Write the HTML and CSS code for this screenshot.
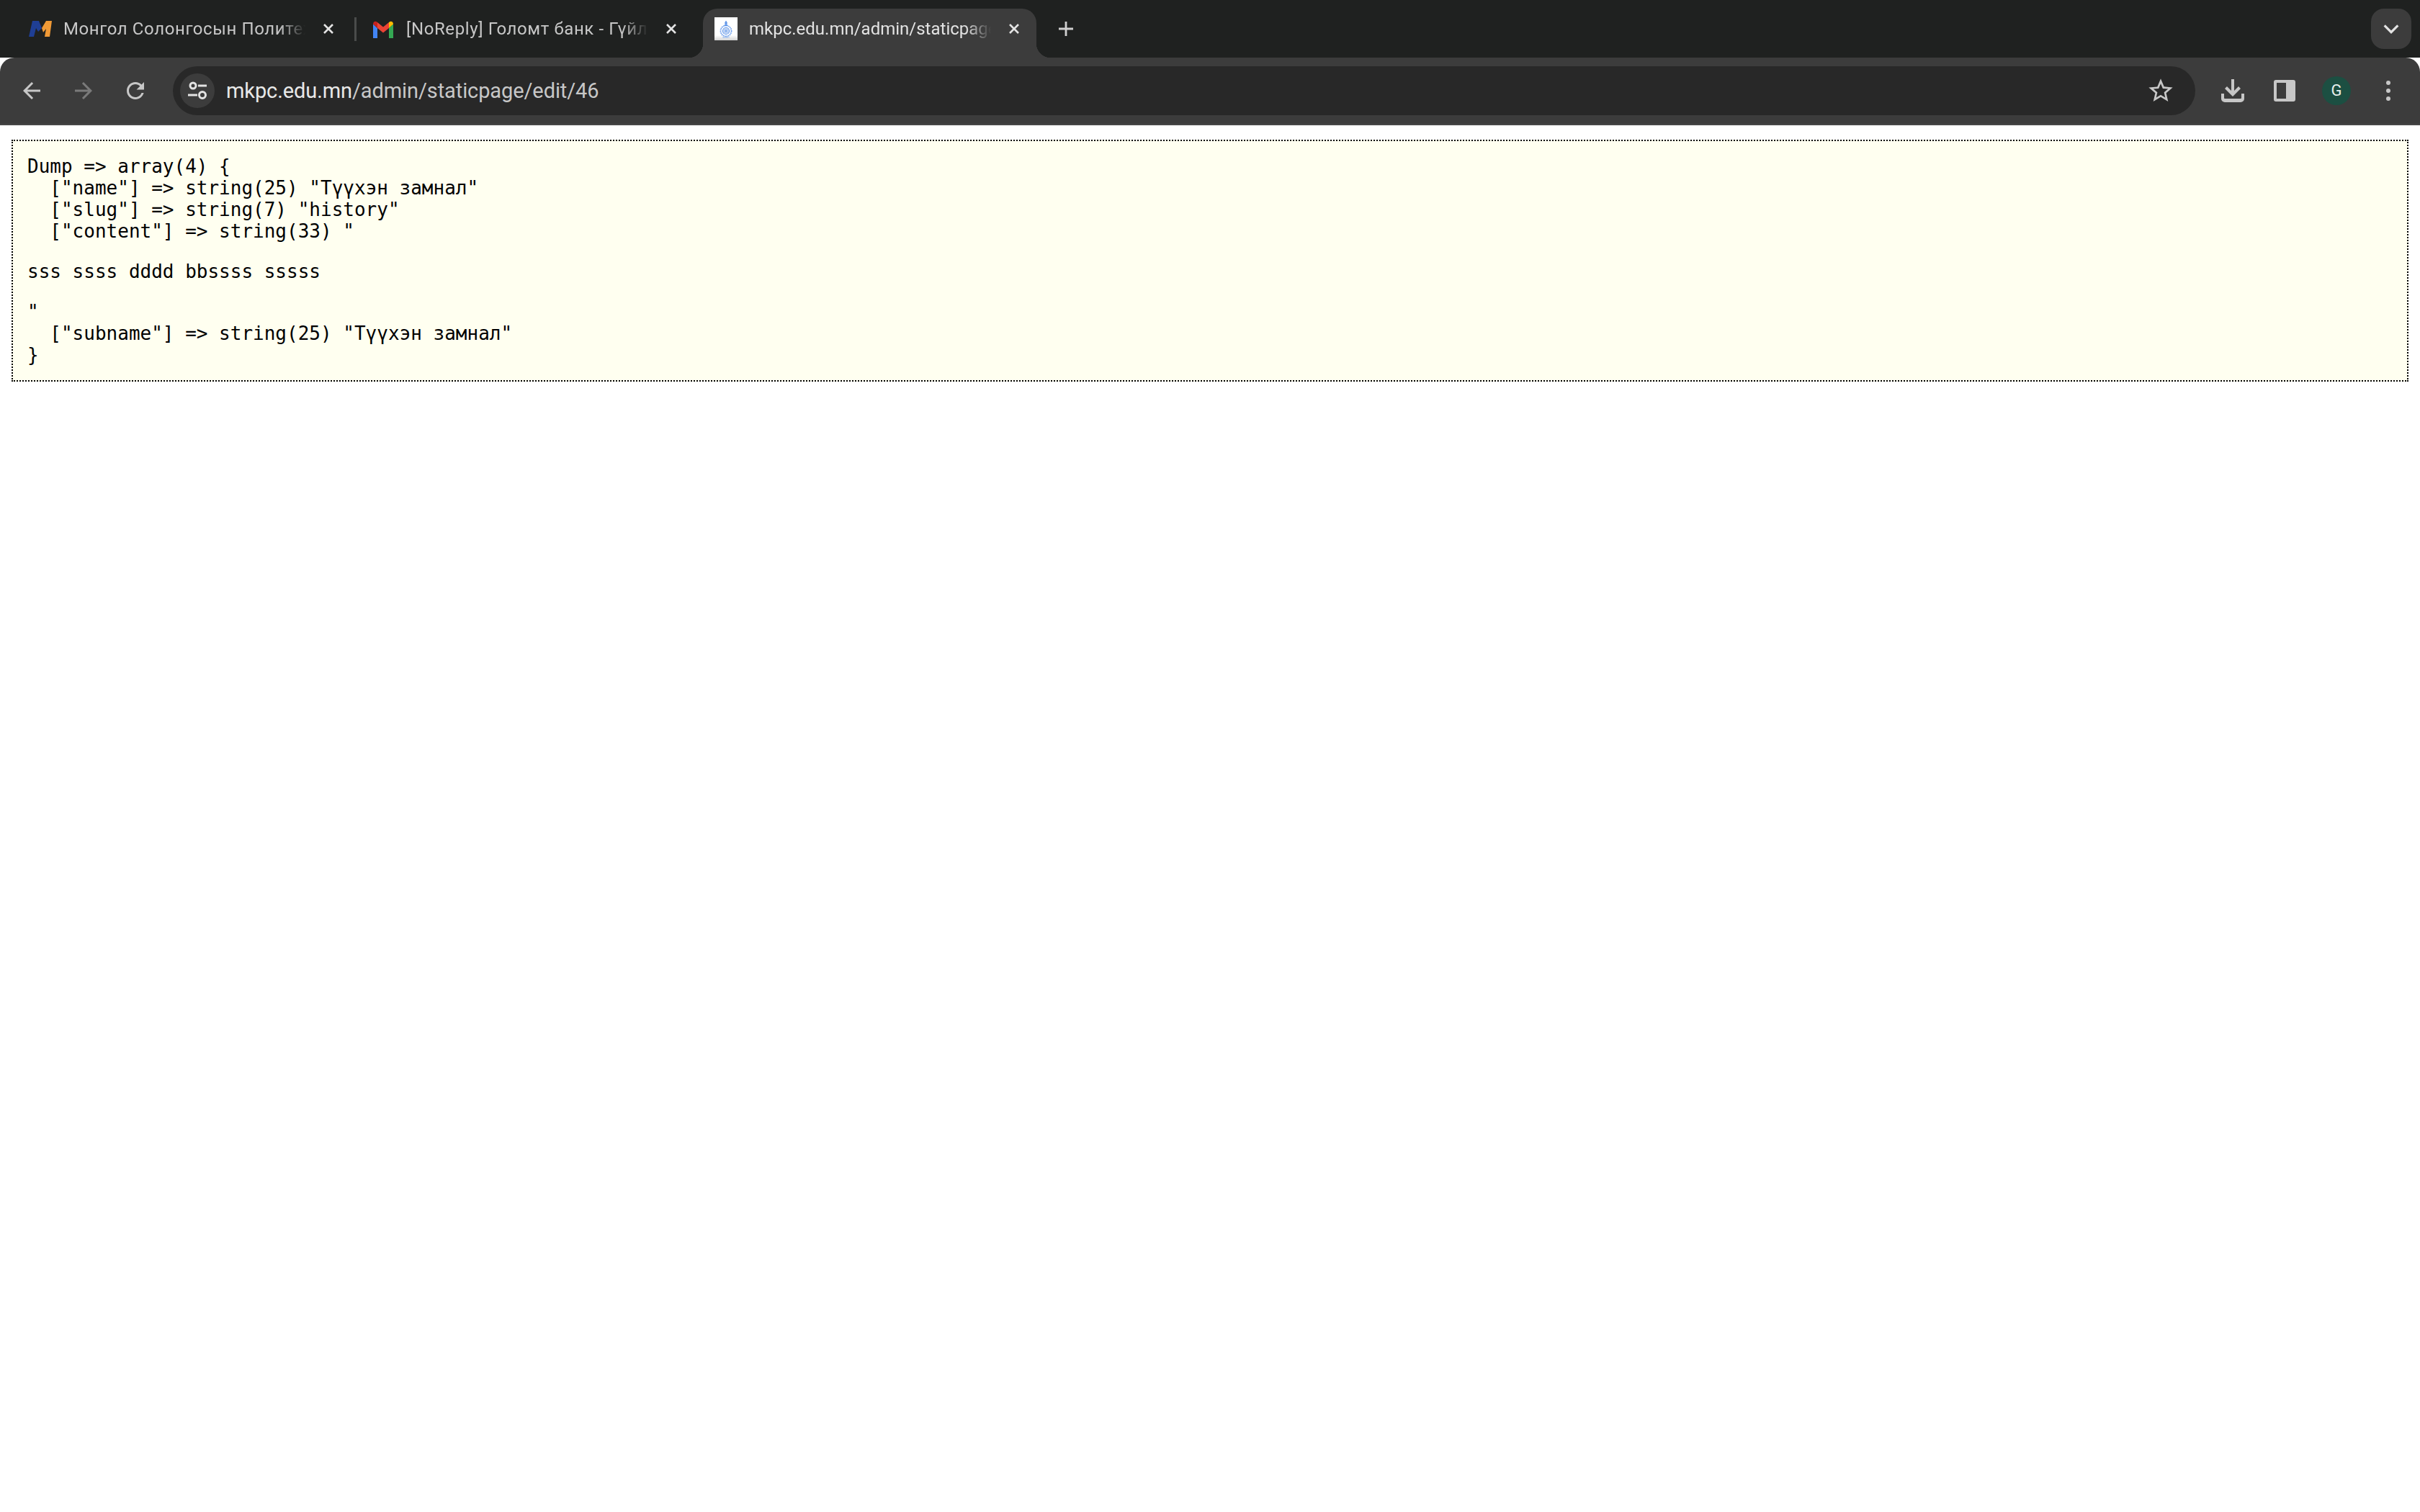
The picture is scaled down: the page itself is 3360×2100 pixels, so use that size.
FILE: index.html
```html
<!DOCTYPE html>
<html lang="mn">
<head>
<meta charset="utf-8">
<title>mkpc.edu.mn/admin/staticpage/edit/46</title>
<link rel="stylesheet" href="styles.css">
</head>
<body>
<header class="chrome">
  <div class="tabstrip">
    <div class="tab">
      <svg class="favicon" viewBox="0 0 32 24"><path fill="#1f3f95" d="M5 1h9l4 10-5 5-3-5-3 12H0z"/><path fill="#f09a36" d="M18 11l6-10h8l-3 22h-7l2-11-4 5z"/></svg>
      <span class="tab-title tab-title-wide">Монгол Солонгосын Политехник</span>
      <svg class="tab-close" viewBox="0 0 32 32"><path d="M10 10l12 12M22 10L10 22"/></svg>
    </div>
    <div class="tab-gap tab-gap-line"></div>
    <div class="tab">
      <svg class="favicon" viewBox="0 0 32 26"><path fill="#4285f4" d="M2 26h6V12L2 6.500z"/><path fill="#34a853" d="M24 26h6V6.500L24 12z"/><path fill="#ea4335" d="M8 12V4l8 6.500L24 4v8l-8 6.500z"/><path fill="#fbbc04" d="M24 4c3-2.500 6-.5 6 2.500L24 12z"/><path fill="#c5221f" d="M2 6.500C2 3.500 5 1.500 8 4v8z"/></svg>
      <span class="tab-title tab-title-wide">[NoReply] Голомт банк - Гүйлгээ</span>
      <svg class="tab-close" viewBox="0 0 32 32"><path d="M10 10l12 12M22 10L10 22"/></svg>
    </div>
    <div class="tab-gap"></div>
    <div class="tab tab-active">
      <svg class="favicon favicon-seal" viewBox="0 0 32 32"><defs><linearGradient id="seal-bg" x1="0" y1="0" x2="0" y2="1"><stop offset=".78" stop-color="#fff"/><stop offset="1" stop-color="#d4d4d4"/></linearGradient></defs><rect width="32" height="32" fill="url(#seal-bg)"/><path fill="#5c93e8" d="M15.200 5h1.600v2h1v2h-1v1h1.400v2h-4.400v-2h1.400V9h-1V7h1z"/><circle cx="16" cy="19" r="7.500" fill="none" stroke="#6a9dec" stroke-width="1.800" stroke-dasharray="1.600 .8"/><circle cx="16" cy="19" r="4.500" fill="none" stroke="#5c93e8" stroke-width="1.200"/><path fill="none" stroke="#8fb4ee" stroke-width="1.200" d="M11.500 19h9M16 14.500v9M12.800 15.800l6.400 6.400M19.200 15.800l-6.400 6.400"/><path fill="none" stroke="#8fb4ee" stroke-width="1.400" stroke-dasharray="1.400 .7" d="M11.500 28h9"/></svg>
      <span class="tab-title">mkpc.edu.mn/admin/staticpage/edit/46</span>
      <svg class="tab-close" viewBox="0 0 32 32"><path d="M10 10l12 12M22 10L10 22"/></svg>
    </div>
    <svg class="new-tab" viewBox="0 0 32 32"><path d="M16 6v20M6 16h20"/></svg>
    <div class="tabstrip-fill"></div>
    <div class="tab-list"><svg viewBox="0 0 24 24"><path d="M5 8.500l7 7 7-7"/></svg></div>
  </div>
  <div class="toolbar">
    <svg class="tool" viewBox="0 0 24 24"><path d="M20 11H7.830l5.590-5.590L12 4l-8 8 8 8 1.410-1.410L7.830 13H20v-2z"/></svg>
    <svg class="tool tool-off" viewBox="0 0 24 24"><path d="M4 11h12.170l-5.590-5.590L12 4l8 8-8 8-1.410-1.410L16.170 13H4v-2z"/></svg>
    <svg class="tool" viewBox="0 0 24 24"><path d="M17.650 6.350C16.200 4.900 14.210 4 12 4c-4.420 0-7.990 3.580-7.990 8s3.570 8 7.990 8c3.730 0 6.840-2.550 7.730-6h-2.080c-.82 2.330-3.040 4-5.650 4-3.310 0-6-2.690-6-6s2.690-6 6-6c1.660 0 3.140.69 4.220 1.780L13 11h7V4l-2.350 2.350z"/></svg>
    <div class="omnibox">
      <div class="site-chip">
        <svg viewBox="0 0 48 48"><g fill="none" stroke="#e3e3e3" stroke-width="3"><circle cx="18" cy="17" r="4"/><path d="M25 17h12"/><path d="M11 30h13"/><circle cx="31" cy="30" r="4.500"/></g></svg>
      </div>
      <span class="url"><span class="url-host">mkpc.edu.mn</span>/admin/staticpage/edit/46</span>
      <svg class="star" viewBox="0 0 24 24"><path d="M22 9.240l-7.190-.62L12 2 9.190 8.630 2 9.240l5.460 4.730L5.820 21 12 17.270 18.180 21l-1.630-7.030L22 9.240zM12 15.400l-3.760 2.270 1-4.280-3.320-2.880 4.380-.38L12 6.100l1.710 4.040 4.380.38-3.320 2.880 1 4.280L12 15.400z"/></svg>
    </div>
    <div class="actions">
      <svg class="action" viewBox="0 0 40 40"><path d="M18 4h4v16l6-6 3 3-11 11L9 17l3-3 6 6z"/><path d="M4 24h4v6a1 1 0 0 0 1 1h22a1 1 0 0 0 1-1v-6h4v7a5 5 0 0 1-5 5H9a5 5 0 0 1-5-5z"/></svg>
      <svg class="action" viewBox="0 0 40 40"><path fill-rule="evenodd" d="M8 5h24a3 3 0 0 1 3 3v24a3 3 0 0 1-3 3H8a3 3 0 0 1-3-3V8a3 3 0 0 1 3-3zm1 4v22h13V9z"/></svg>
      <div class="avatar">G</div>
      <svg class="action" viewBox="0 0 40 40"><circle cx="20" cy="9" r="3"/><circle cx="20" cy="20" r="3"/><circle cx="20" cy="31" r="3"/></svg>
    </div>
  </div>
</header>
<main class="page">
  <div class="dump">
    <pre class="dump-block">Dump =&gt; array(4) {
  ["name"] =&gt; string(25) "Түүхэн замнал"
  ["slug"] =&gt; string(7) "history"
  ["content"] =&gt; string(33) "</pre>
    <pre class="dump-block">sss ssss dddd bbssss sssss</pre>
    <pre class="dump-block">"
  ["subname"] =&gt; string(25) "Түүхэн замнал"
}</pre>
  </div>
</main>
</body>
</html>
```
FILE: styles.css
```css
* { box-sizing: border-box; }
html, body { margin: 0; padding: 0; background: #fff; }
body { width: 3360px; height: 2100px; overflow: hidden; }

.chrome { font-family: Roboto, "Liberation Sans", sans-serif; }

.tabstrip {
  display: flex;
  align-items: flex-end;
  height: 80px;
  padding-left: 24px;
  padding-right: 12px;
  background: #1f2120;
}

.tab {
  position: relative;
  display: flex;
  align-items: center;
  width: 463px;
  height: 68px;
  padding: 0 15px 12px 16px;
  border-radius: 20px 20px 0 0;
}
.tab-active { background: #3c3c3c; }
.tab-active::before,
.tab-active::after {
  content: "";
  position: absolute;
  bottom: 0;
  width: 20px;
  height: 20px;
}
.tab-active::before { left: -20px; background: radial-gradient(circle at 0 0, transparent 20px, #3c3c3c 20.5px); }
.tab-active::after { right: -20px; background: radial-gradient(circle at 100% 0, transparent 20px, #3c3c3c 20.5px); }

.tab-gap { width: 13px; height: 68px; flex: none; position: relative; }
.tab-gap-line::before {
  content: "";
  position: absolute;
  left: 5px;
  top: 12px;
  width: 3px;
  height: 33px;
  background: #4a4c4b;
}

.favicon { flex: none; width: 32px; height: 26px; margin-right: 16px; }
.favicon-seal { height: 32px; }

.tab-title {
  flex: 1;
  min-width: 0;
  margin-right: 16px;
  overflow: hidden;
  white-space: nowrap;
  font-size: 24px;
  line-height: 32px;
  color: #c7c7c7;
  -webkit-mask-image: linear-gradient(to right, #000 calc(100% - 36px), transparent);
  mask-image: linear-gradient(to right, #000 calc(100% - 36px), transparent);
}
.tab-title-wide { letter-spacing: 0.6px; }
.tab-active .tab-title { color: #e3e3e3; }

.tab-close { flex: none; width: 32px; height: 32px; }
.tab-close path { fill: none; stroke: #e3e3e3; stroke-width: 2.6; }

.new-tab { flex: none; width: 32px; height: 32px; margin: 0 0 24px 25px; }
.new-tab path { fill: none; stroke: #d0d0d0; stroke-width: 2.8; }

.tabstrip-fill { flex: 1; }

.tab-list {
  display: flex;
  align-items: center;
  justify-content: center;
  width: 56px;
  height: 56px;
  margin-bottom: 12px;
  border-radius: 18px;
  background: #3c3c3c;
}
.tab-list svg { width: 32px; height: 32px; }
.tab-list path { fill: none; stroke: #e3e3e3; stroke-width: 2.4; }

.toolbar {
  display: flex;
  align-items: center;
  height: 94px;
  padding: 0 26px;
  border-radius: 20px 20px 0 0;
  border-bottom: 2px solid #474747;
  background: #3c3c3c;
}

.tool { flex: none; width: 36px; height: 36px; margin-right: 36px; fill: #c7c7c7; }
.tool-off { fill: #7a7a7a; }
.tool:nth-child(3) { margin-right: 34px; }

.omnibox {
  display: flex;
  align-items: center;
  flex: none;
  width: 2808px;
  height: 68px;
  padding: 0 28px 0 10px;
  border-radius: 34px;
  background: #282828;
}

.site-chip {
  flex: none;
  display: flex;
  width: 48px;
  height: 48px;
  border-radius: 50%;
  background: #3c3c3c;
}
.site-chip svg { width: 48px; height: 48px; }

.url {
  flex: 1;
  margin-left: 16px;
  white-space: nowrap;
  font-size: 29px;
  letter-spacing: -0.1px;
  line-height: 36px;
  color: #c7c7c7;
}
.url-host { color: #e8e8e8; }

.star { flex: none; width: 40px; height: 40px; fill: #c7c7c7; }

.actions {
  display: flex;
  align-items: center;
  gap: 32px;
  margin-left: 32px;
}
.action { flex: none; width: 40px; height: 40px; fill: #c7c7c7; }

.avatar {
  flex: none;
  width: 40px;
  height: 40px;
  border-radius: 50%;
  background: #1c4f42;
  color: #e8f0ec;
  font-size: 22px;
  line-height: 40px;
  text-align: center;
}

.page { padding: 20px 16px 0; }

.dump {
  padding: 20px;
  border: 2px dotted #000;
  background: #fffff0;
  color: #000;
}

.dump-block {
  margin: 26px 0 0;
  font-family: "DejaVu Sans Mono", monospace;
  font-size: 26px;
  line-height: 30px;
}
.dump-block:first-child { margin-top: 0; }
```
